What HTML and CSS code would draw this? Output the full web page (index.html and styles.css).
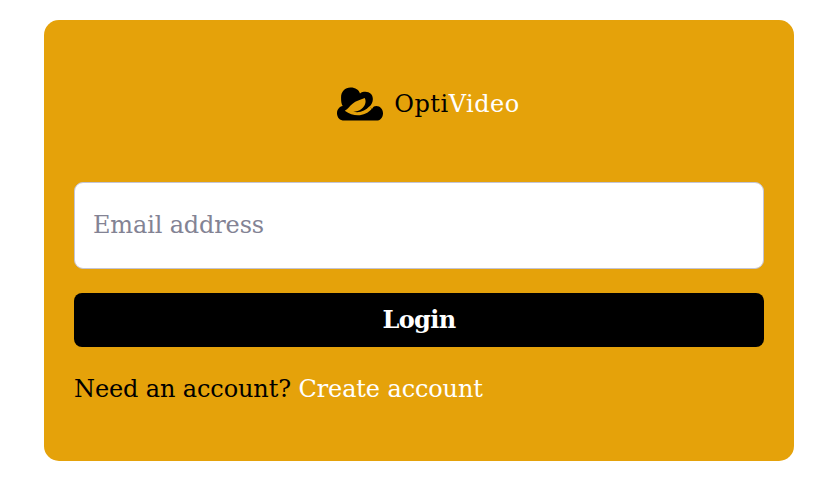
FILE: index.html
```html
<!DOCTYPE html>
<html lang="en">
<head>
<meta charset="utf-8">
<title>OptiVideo</title>
<link rel="stylesheet" href="styles.css">
</head>
<body>
<main class="card">
  <div class="brand">
    <svg class="logo" viewBox="21 21 136 100" aria-hidden="true">
      <path d="M43 120C29 120 21 110 21 98C21 87 28 79 38 77C34 71 33 64 33 51C33 34 45 22 61 22C76 22 86 29 89 40C94 36 99 35 105 35C118 35 127 44 127 56C127 65 123 72 117 79L125 85C128 79 132 77 137 77C149 77 157 87 157 98C157 111 149 120 137 120Z"/>
      <path class="leaf" d="M44 91C54 85 58 77 67 70C77 61 90 59 103 53C109 64 104 77 94 85C86 92 78 93 69 94C88 98 105 92 117 78L124 85C105 108 72 111 44 91Z"/>
    </svg>
    <span class="name">Opti<span class="light">Video</span></span>
  </div>
  <form class="form">
    <input class="email" type="email" placeholder="Email address" aria-label="Email address">
    <button class="login" type="button"><span class="login-text">Login</span></button>
  </form>
  <p class="signup"><span class="question">Need an account?</span> <a class="link">Create account</a></p>
</main>
</body>
</html>
```
FILE: styles.css
```css
* { box-sizing: border-box; }
body {
  margin: 0;
  padding: 20px 31px 35px 44px;
  background: #fff;
  color: #000;
  font: 24px/36px "DejaVu Serif", serif;
}
.card {
  height: 441px;
  padding: 66px 30px 0;
  border-radius: 15px;
  background: #e5a20a;
}
.brand {
  display: flex;
  align-items: center;
  justify-content: center;
  gap: 11px;
  height: 36px;
  padding-left: 19px;
}
.logo { width: 46px; height: 34px; }
.name { letter-spacing: 0.5px; }
.leaf { fill: #e5a20a; }
.light, .link { color: #fff; }
.form { display: grid; gap: 24px; margin-top: 60px; }
.email {
  width: 100%;
  height: 87px;
  padding: 0 18px 2px;
  border: 1px solid #c4c4d4;
  border-radius: 9px;
  background: #fff;
  font: inherit;
  letter-spacing: -0.15px;
}
.email::placeholder { color: #838394; opacity: 1; }
.login {
  height: 54px;
  padding: 0;
  border: 0;
  border-radius: 8px;
  background: #000;
  color: #fff;
  font: inherit;
  font-weight: 600;
  letter-spacing: -0.6px;
}
.signup { margin: 24px 0 0; white-space: nowrap; letter-spacing: -0.12px; }
```
